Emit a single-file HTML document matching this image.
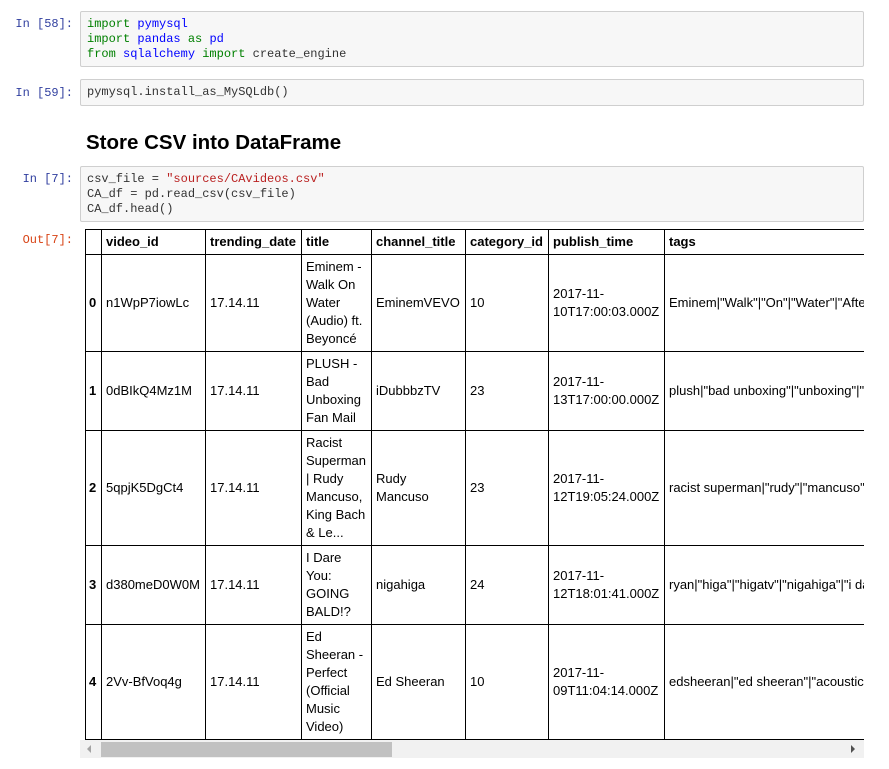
<!DOCTYPE html>
<html><head><meta charset="utf-8"><style>
*{margin:0;padding:0;box-sizing:border-box}
body{width:889px;height:769px;background:#fff;position:relative;overflow:hidden;font-family:"Liberation Sans",Arial,sans-serif}
.p{position:absolute;font:12px/15px "Liberation Mono",monospace;color:#303F9F;text-align:right;width:73px;left:0}
.c{position:absolute;left:80px;width:784px;background:#f7f7f7;border:1px solid #cfcfcf;border-radius:2px;font:12px/15px "Liberation Mono",monospace;color:#333;padding:5px 6px;white-space:pre}
.k{color:#008000}.m{color:#0000ff}.s{color:#ba2121}
h2{position:absolute;left:86px;top:131px;font-size:20.5px;font-weight:bold;color:#000}
.out{position:absolute;left:80px;top:229px;width:784px;height:529px;overflow:hidden}
table{position:absolute;left:5px;top:0;border-collapse:collapse;table-layout:fixed;width:1100px;font-size:13px;line-height:18px;color:#000}
td,th{border:1px solid #000;padding:0 4px;vertical-align:middle;text-align:left;white-space:normal;overflow:hidden}
th{font-weight:bold}
td.i{font-weight:bold;padding:0 3px}
.tg{white-space:nowrap}
.sb{position:absolute;left:0;top:511px;width:784px;height:18px;background:#f1f1f1}
.th{position:absolute;left:21px;top:2px;width:291px;height:15px;background:#c1c1c1}
</style></head><body>
<div class="p" style="top:17px">In [58]:</div>
<div class="c" style="top:11px;height:56px"><span class="k">import</span> <span class="m">pymysql</span>
<span class="k">import</span> <span class="m">pandas</span> <span class="k">as</span> <span class="m">pd</span>
<span class="k">from</span> <span class="m">sqlalchemy</span> <span class="k">import</span> create_engine</div>
<div class="p" style="top:86px">In [59]:</div>
<div class="c" style="top:79px;height:27px">pymysql.install_as_MySQLdb()</div>
<h2>Store CSV into DataFrame</h2>
<div class="p" style="top:172px">In [7]:</div>
<div class="c" style="top:166px;height:56px">csv_file = <span class="s">"sources/CAvideos.csv"</span>
CA_df = pd.read_csv(csv_file)
CA_df.head()</div>
<div class="p" style="top:233px;color:#D84315">Out[7]:</div>
<div class="out">
<table>
<colgroup><col style="width:16px"><col style="width:104px"><col style="width:96px"><col style="width:70px"><col style="width:94px"><col style="width:83px"><col style="width:116px"><col style="width:521px"></colgroup>
<tr style="height:25px"><th></th><th>video_id</th><th>trending_date</th><th>title</th><th>channel_title</th><th>category_id</th><th>publish_time</th><th>tags</th></tr>
<tr style="height:97px"><td class="i">0</td><td>n1WpP7iowLc</td><td>17.14.11</td><td>Eminem - Walk On Water (Audio) ft. Beyoncé</td><td>EminemVEVO</td><td>10</td><td>2017-11-10T17:00:03.000Z</td><td class="tg">Eminem|"Walk"|"On"|"Water"|"Aftermath/Shady/Interscope"</td></tr>
<tr style="height:79px"><td class="i">1</td><td>0dBIkQ4Mz1M</td><td>17.14.11</td><td>PLUSH - Bad Unboxing Fan Mail</td><td>iDubbbzTV</td><td>23</td><td>2017-11-13T17:00:00.000Z</td><td class="tg">plush|"bad unboxing"|"unboxing"|"fan mail"</td></tr>
<tr style="height:115px"><td class="i">2</td><td>5qpjK5DgCt4</td><td>17.14.11</td><td>Racist Superman | Rudy Mancuso, King Bach &amp; Le...</td><td>Rudy Mancuso</td><td>23</td><td>2017-11-12T19:05:24.000Z</td><td class="tg">racist superman|"rudy"|"mancuso"|"king"</td></tr>
<tr style="height:79px"><td class="i">3</td><td>d380meD0W0M</td><td>17.14.11</td><td>I Dare You: GOING BALD!?</td><td>nigahiga</td><td>24</td><td>2017-11-12T18:01:41.000Z</td><td class="tg">ryan|"higa"|"higatv"|"nigahiga"|"i dare you"</td></tr>
<tr style="height:115px"><td class="i">4</td><td>2Vv-BfVoq4g</td><td>17.14.11</td><td>Ed Sheeran - Perfect (Official Music Video)</td><td>Ed Sheeran</td><td>10</td><td>2017-11-09T11:04:14.000Z</td><td class="tg">edsheeran|"ed sheeran"|"acoustic"|"live"</td></tr>
</table>
<div class="sb"><div class="th"></div>
<svg style="position:absolute;left:6px;top:5px" width="6" height="8"><path d="M5 0L1 4L5 8Z" fill="#a3a3a3"/></svg>
<svg style="position:absolute;left:770px;top:5px" width="6" height="8"><path d="M1 0L5 4L1 8Z" fill="#505050"/></svg>
</div>
</div>
</body></html>
